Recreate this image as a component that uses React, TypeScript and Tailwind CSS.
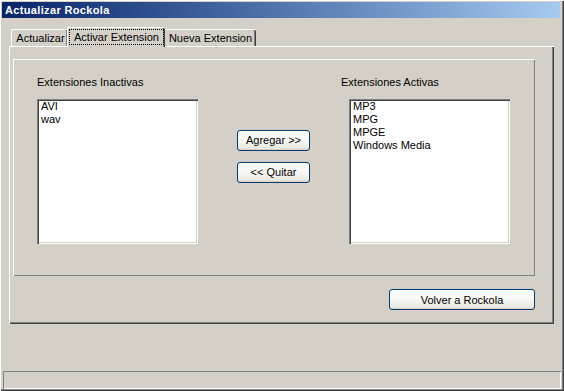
import React from "react";

const font = { fontFamily: '"Liberation Sans", Arial, sans-serif' };

function XPButton({ label, className }: { label: string; className: string }) {
  return (
    <div
      className={`flex items-center justify-center rounded-[3px] border border-[#003c74] bg-gradient-to-b from-[#ffffff] via-[#f7f7f4] to-[#e6e4dc] text-[11px] text-black shadow-[inset_0_-1px_0_#d6d0c5] ${className}`}
    >
      {label}
    </div>
  );
}

function ListBox({ items }: { items: string[] }) {
  return (
    <div className="h-[145px] w-[161px] bg-white pl-[4px] pt-[1px] text-[11px] leading-[13px] text-black shadow-[inset_1px_1px_0_#808080,inset_2px_2px_0_#404040,inset_-1px_-1px_0_#ffffff,inset_-2px_-2px_0_#d4d0c8]">
      {items.map((it) => (
        <div key={it}>{it}</div>
      ))}
    </div>
  );
}

export default function App() {
  return (
    <div
      style={font}
      className="flex h-[391px] w-[564px] flex-col bg-[#d4d0c8] shadow-[inset_1px_1px_0_#ffffff,inset_-1px_-1px_0_#404040,inset_-2px_-2px_0_#808080]"
    >
      {/* Title bar */}
      <div className="ml-[2px] mt-[2px] flex h-[16px] w-[558px] items-center bg-gradient-to-r from-[#0a246a] to-[#a6caf0] pl-[3px] text-[11px] font-bold tracking-[0.35px] text-white">
        Actualizar Rockola
      </div>

      {/* Tab control */}
      <div className="ml-[9px] mt-[9px] w-[545px]">
        <div className="relative z-10 flex h-[19px] items-end pl-[2px] text-[11px] text-black">
          <div className="flex h-[17px] w-[56px] items-center justify-center rounded-tl-[2px] border-l border-t border-white pl-[2px] shadow-[inset_-1px_0_0_#808080]">
            Actualizar
          </div>
          <div className="mb-[-1px] flex h-[20px] w-[98px] items-start justify-center rounded-t-[2px] border-l border-t border-white bg-[#d4d0c8] pt-[1px] shadow-[inset_-1px_0_0_#404040,inset_-2px_0_0_#808080]">
            <div className="flex h-[16px] items-center border border-dotted border-black px-[4px]">
              Activar Extension
            </div>
          </div>
          <div className="flex h-[17px] w-[91px] items-center justify-center rounded-tr-[2px] border-t border-white shadow-[inset_-1px_0_0_#404040,inset_-2px_0_0_#808080]">
            Nueva Extension
          </div>
        </div>

        <div className="h-[278px] w-[545px] border-l border-t border-white pl-[3px] pt-[12px] shadow-[inset_-1px_-1px_0_#404040,inset_-2px_-2px_0_#808080]">
          {/* Group panel */}
          <div className="flex h-[217px] w-[522px] pl-[24px] pt-[17px] text-[11px] text-black shadow-[inset_1px_1px_0_#ffffff,inset_-1px_-1px_0_#808080]">
            <div className="flex w-[161px] flex-col">
              <div className="h-[13px] leading-[13px]">Extensiones Inactivas</div>
              <div className="mt-[10px]">
                <ListBox items={["AVI", "wav"]} />
              </div>
            </div>
            <div className="ml-[39px] flex flex-col pt-[54px]">
              <XPButton label="Agregar >>" className="h-[21px] w-[73px]" />
              <XPButton label="<< Quitar" className="mt-[11px] h-[21px] w-[73px]" />
            </div>
            <div className="ml-[31px] flex flex-col">
              <div className="h-[13px] leading-[13px]">Extensiones Activas</div>
              <div className="ml-[8px] mt-[10px]">
                <ListBox items={["MP3", "MPG", "MPGE", "Windows Media"]} />
              </div>
            </div>
          </div>
          <div className="mt-[13px] flex w-[522px] justify-end">
            <XPButton label="Volver a Rockola" className="h-[21px] w-[146px] pt-[1px]" />
          </div>
        </div>
      </div>

      {/* Status bar */}
      <div className="mb-[2px] ml-[3px] mt-auto h-[18px] w-[558px] shadow-[inset_1px_1px_0_#808080,inset_-1px_-1px_0_#ffffff]" />
    </div>
  );
}
